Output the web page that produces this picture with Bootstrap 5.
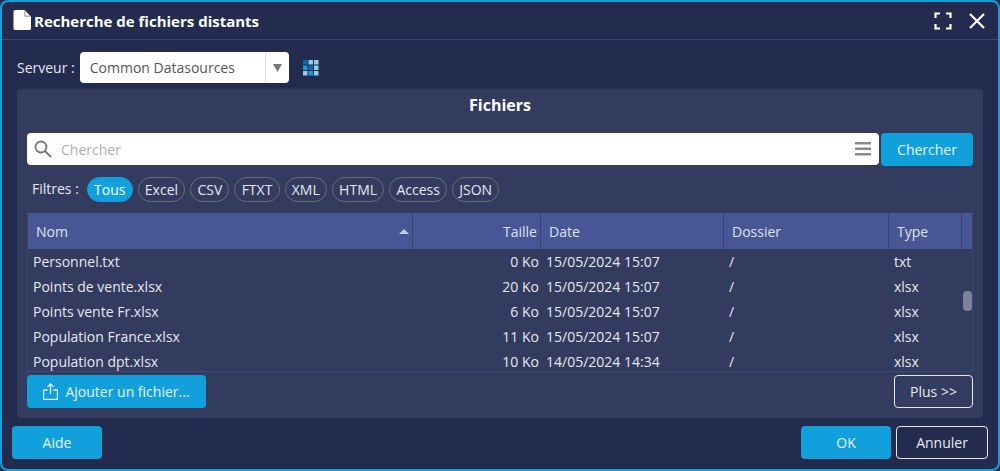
<!DOCTYPE html>
<html lang="fr">
<head>
<meta charset="utf-8">
<title>Recherche de fichiers distants</title>
<link href="https://cdn.jsdelivr.net/npm/bootstrap@5.3.0/dist/css/bootstrap.min.css" rel="stylesheet">
<style>
html,body{height:471px;overflow:hidden;background:#232c4f}
body{font-family:"Open Sans","Noto Sans",sans-serif;font-size:14px;color:#e6e8f0}
.dlg{height:471px;background:#232c4f;border:2px solid #11a0dc;border-radius:8px;overflow:hidden}
.dlg-head{height:38px;border-bottom:1px solid #3a4570;padding:0 12px 0 11px;flex:none}
.dlg-title{font-size:15px;font-weight:700;color:#fff;margin:1px 0 0 3px}
.ico-file{margin-top:-1px}
.tool{height:49px;padding:12px 0 0 15px;flex:none}
.srv-label{margin-right:5px;color:#e6e8f0;line-height:31px}
.srv-sel{width:209px;height:31px;background:#fff;border-radius:4px;color:#555}
.srv-text{flex:1;padding-left:10px}
.srv-arrow{width:24px;height:100%;border-left:1px solid #ddd}
.ico-grid{margin:8px 0 0 14px}
.panel{margin:0 15px;height:329px;background:#333b5f;border-radius:4px;padding:0 10px;flex:none}
.panel-title{height:44px;font-size:16px;font-weight:700;color:#fff;padding-top:4px;text-align:center}
.search{height:32px;background:#fff;border-radius:4px;padding:0 8px 0 7px;width:852px}
.search-in{border:0;outline:0;flex:1;min-width:0;margin-left:7px;font-size:14px;background:none}
.search-in::placeholder{color:#adadad;opacity:1}
.act{background:#11a0dc;color:#e8f4fb;border:0;border-radius:4px;font-size:14px;padding:0}
.act:hover{background:#11a0dc;color:#e8f4fb}
.go{width:92px;height:33px;margin-left:2px}
.filters{height:25px;margin-top:11px;margin-bottom:11px;padding-left:5px}
.flt-label{margin-right:8px;margin-bottom:2px}
.chip{height:25px;border:1px solid #6d6c72;border-radius:13px;padding:0 6.2px;margin-right:5px;display:flex;align-items:center;color:#e6e8f0}
.chip-on{background:#11a0dc;border-color:#11a0dc;color:#fff}
.grid-box{height:159px;overflow:hidden;position:relative;border:1px solid #3a4878;border-top:0;margin-bottom:3px}
.files{table-layout:fixed;border-collapse:separate;border-spacing:0;width:944px}
.c-nom{width:385px}.c-taille{width:128px}.c-date{width:183px}.c-dos{width:165px}.c-type{width:73px}.c-end{width:10px}
.files th{height:36px;background:#475695;font-weight:400;padding:0 8px;border-right:1px solid #35416f;color:#dfe2ee;position:relative}
.files th:last-child{border-right:0;padding:0}
.files td{height:25px;padding:0 5px;white-space:nowrap;color:#e6e8f0}
.files th.num{padding-right:3px}
.files td.num{padding-right:2px}
.sort{position:absolute;right:3px;top:16px;width:0;height:0;border:5px solid transparent;border-top:0;border-bottom:5px solid #c9ccd6}
.thumb{position:absolute;left:935px;top:78px;width:9px;height:20px;border-radius:4px;background:#7c829b}
.act-add{width:179px;height:33px}
.ico-up{margin-right:7px}
.more{width:79px;height:33px;background:transparent;border:1px solid #e6e8f0;border-radius:4px;color:#e6e8f0;padding:0;font-size:14px}
.more:hover{color:#e6e8f0;border-color:#e6e8f0}
.foot{padding:8px 10px 0 10px}
.f-btn{width:90px;height:33px}
.f-cancel{width:92px;margin-left:5px}
</style>
</head>
<body>
<div class="dlg d-flex flex-column">
  <div class="dlg-head d-flex align-items-center">
    <svg class="ico-file" width="18" height="20" viewBox="0 0 18 20"><path d="M2 0h9.500L18 6.500V18.500a1.500 1.500 0 0 1-1.500 1.500H2A1.500 1.500 0 0 1 .5 18.500V1.500A1.500 1.500 0 0 1 2 0z" fill="#fff"/><path d="M11.800.5v5.700h5.700" fill="none" stroke="#232c4f" stroke-width=".5"/></svg>
    <span class="dlg-title">Recherche de fichiers distants</span>
    <svg class="ms-auto" width="18" height="18" viewBox="0 0 18 18" fill="none" stroke="#fff" stroke-width="2.200"><path d="M1.500 6V1.500H6M12 1.500h4.500V6M16.500 12v4.500H12M6 16.500H1.500V12"/></svg>
    <svg class="ms-3" width="18" height="18" viewBox="0 0 18 18" fill="none" stroke="#fff" stroke-width="2.200"><path d="M2 2l14 14M16 2L2 16"/></svg>
  </div>
  <div class="tool d-flex align-items-start">
    <span class="srv-label">Serveur :</span>
    <div class="srv-sel d-flex align-items-center">
      <span class="srv-text">Common Datasources</span>
      <span class="srv-arrow d-flex align-items-center justify-content-center">
        <svg width="9" height="8" viewBox="0 0 9 8"><path d="M0 0h9L4.500 8z" fill="#777"/></svg>
      </span>
    </div>
    <svg class="ico-grid" width="16" height="16" viewBox="0 0 16 16">
      <g fill="#11a0dc"><rect x="0" y="5.500" width="4.500" height="4.500"/><rect x="5.500" y="11" width="4.500" height="4.500"/></g>
      <g fill="#8fcde8"><rect x="5.500" y="0" width="4.500" height="4.500"/><rect x="11" y="0" width="4.500" height="4.500"/><rect x="0" y="11" width="4.500" height="4.500"/><rect x="11" y="5.500" width="4.500" height="4.500"/><rect x="11" y="11" width="4.500" height="4.500"/></g>
      <g fill="#0d6f9e"><rect x="0" y="0" width="4.500" height="4.500"/><rect x="5.500" y="5.500" width="4.500" height="4.500"/></g>
    </svg>
  </div>
  <div class="panel">
    <div class="panel-title">Fichiers</div>
    <div class="d-flex align-items-start">
      <div class="search d-flex align-items-center">
        <svg width="18" height="18" viewBox="0 0 18 18" fill="none" stroke="#777" stroke-width="1.800"><circle cx="7" cy="7" r="5.500"/><path d="M11 11l6 6"/></svg>
        <input class="search-in" type="text" placeholder="Chercher">
        <svg width="16" height="14" viewBox="0 0 16 14" fill="#8a8a8a"><rect width="16" height="2.500" y="0"/><rect width="16" height="2.500" y="5.500"/><rect width="16" height="2.500" y="11"/></svg>
      </div>
      <button class="btn act go" type="button">Chercher</button>
    </div>
    <div class="filters d-flex align-items-center">
      <span class="flt-label">Filtres :</span>
      <span class="chip chip-on">Tous</span><span class="chip">Excel</span><span class="chip">CSV</span><span class="chip">FTXT</span><span class="chip">XML</span><span class="chip">HTML</span><span class="chip">Access</span><span class="chip">JSON</span>
    </div>
    <div class="grid-box">
      <table class="files">
        <colgroup><col class="c-nom"><col class="c-taille"><col class="c-date"><col class="c-dos"><col class="c-type"><col class="c-end"></colgroup>
        <thead><tr><th>Nom<span class="sort"></span></th><th class="text-end num">Taille</th><th>Date</th><th>Dossier</th><th>Type</th><th></th></tr></thead>
        <tbody>
          <tr><td>Personnel.txt</td><td class="text-end num">0 Ko</td><td>15/05/2024 15:07</td><td>/</td><td>txt</td><td></td></tr>
          <tr><td>Points de vente.xlsx</td><td class="text-end num">20 Ko</td><td>15/05/2024 15:07</td><td>/</td><td>xlsx</td><td></td></tr>
          <tr><td>Points vente Fr.xlsx</td><td class="text-end num">6 Ko</td><td>15/05/2024 15:07</td><td>/</td><td>xlsx</td><td></td></tr>
          <tr><td>Population France.xlsx</td><td class="text-end num">11 Ko</td><td>15/05/2024 15:07</td><td>/</td><td>xlsx</td><td></td></tr>
          <tr><td>Population dpt.xlsx</td><td class="text-end num">10 Ko</td><td>14/05/2024 14:34</td><td>/</td><td>xlsx</td><td></td></tr>
        </tbody>
      </table>
      <div class="thumb"></div>
    </div>
    <div class="d-flex justify-content-between">
      <button class="btn act act-add d-flex align-items-center justify-content-center" type="button">
        <svg class="ico-up" width="15" height="17" viewBox="0 0 15 17" fill="none" stroke="#e8f4fb" stroke-width="1.300"><path d="M4.500 7H1.500a1 1 0 0 0-1 1v7.500a1 1 0 0 0 1 1h12a1 1 0 0 0 1-1V8a1 1 0 0 0-1-1h-3M7.500 11V1M4.500 3.800L7.500 1l3 2.800"/></svg>
        Ajouter un fichier...
      </button>
      <button class="btn more" type="button">Plus &gt;&gt;</button>
    </div>
  </div>
  <div class="foot d-flex">
    <button class="btn act f-btn" type="button">Aide</button>
    <button class="btn act f-btn ms-auto" type="button">OK</button>
    <button class="btn more f-btn f-cancel" type="button">Annuler</button>
  </div>
</div>
</body>
</html>
